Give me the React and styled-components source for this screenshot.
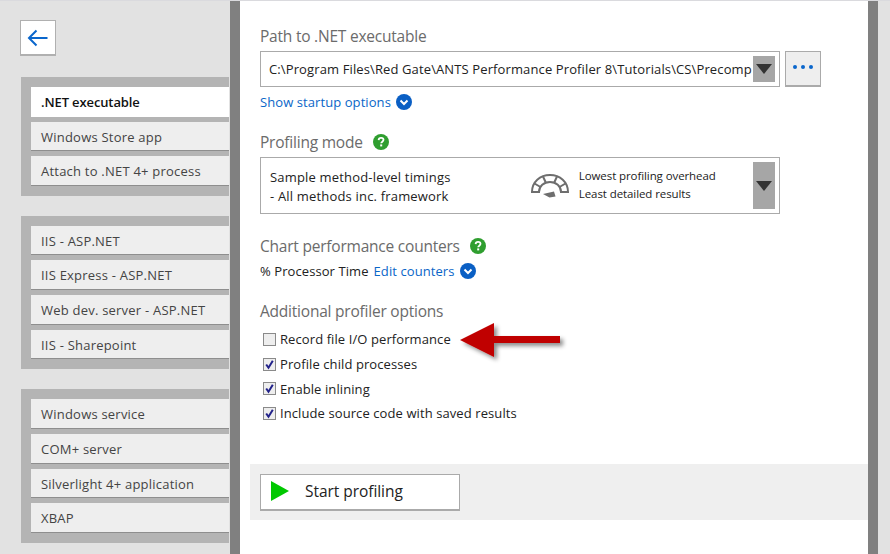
import React from "react";
import styled, { createGlobalStyle } from "styled-components";

const GlobalStyle = createGlobalStyle`
	html, body {
		margin: 0;
		padding: 0;
		background: #fff;
	}
	body {
		font-family: "Open Sans", "Liberation Sans", sans-serif;
		font-size: 13px;
		color: #222;
	}
`;

const Page = styled.div`
	width: 890px;
	height: 554px;
	display: flex;
	overflow: hidden;
	background: #e2e2e2;
	border-top: 1px solid #dadade;
	box-sizing: border-box;
`;

const Sidebar = styled.aside`
	width: 230px;
	flex-shrink: 0;
	box-sizing: border-box;
	padding: 19px 1px 0 21px;
`;

const BackButton = styled.button`
	display: flex;
	align-items: center;
	justify-content: center;
	width: 36px;
	height: 36px;
	padding: 0;
	margin-left: -1px;
	box-sizing: border-box;
	background: #fff;
	border: 1px solid #b0b0b0;
	border-bottom: 2px solid #b0b0b0;
`;

const NavGroup = styled.div`
	display: flex;
	flex-direction: column;
	gap: 5px;
	padding: 10px 0 10px 10px;
	margin-top: ${props => props.$top}px;
	background: #b4b4b4;
`;

const NavItem = styled.div`
	height: ${props => props.$height}px;
	box-sizing: border-box;
	display: flex;
	align-items: center;
	padding-left: 10px;
	padding-top: ${props => (props.$height === 29 ? 1 : 0)}px;
	font-size: 13px;
	letter-spacing: ${props => (props.$selected ? "-0.12px" : "0.22px")};
	white-space: nowrap;
	color: ${props => (props.$selected ? "#111" : "#444")};
	font-weight: ${props => (props.$selected ? 600 : 400)};
	background: ${props => (props.$selected ? "#fff" : "#eee")};
	border-bottom: ${props => (props.$selected ? "none" : "1px solid #8e8e8e")};
`;

const Main = styled.main`
	position: relative;
	width: 648px;
	height: 553px;
	flex-shrink: 0;
	box-sizing: border-box;
	background: #fff;
	border-left: 10px solid #808080;
	border-right: 10px solid #808080;
	padding: 24px 0 0 20px;
`;

const Heading = styled.h2`
	display: flex;
	align-items: center;
	gap: 10px;
	margin: ${props => props.$top || 0}px 0 0;
	height: 22px;
	font-size: 15.5px;
	font-weight: 400;
	letter-spacing: -0.22px;
	color: #6b6b6b;
`;

const PathRow = styled.div`
	display: flex;
	gap: 5px;
	margin-top: 4px;
`;

const PathBox = styled.div`
	width: 520px;
	height: 36px;
	box-sizing: border-box;
	display: flex;
	align-items: center;
	justify-content: space-between;
	padding: 0 4px 0 8px;
	background: #fff;
	border: 1px solid #aaa;
`;

const PathText = styled.span`
	white-space: nowrap;
	font-size: 13px;
	letter-spacing: 0.12px;
	color: #222;
`;

const DropButton = styled.span`
	width: 22px;
	height: ${props => props.$height}px;
	flex-shrink: 0;
	display: flex;
	align-items: center;
	justify-content: center;
	background: #a6a6a6;
`;

const DownTriangle = styled.span`
	width: 0;
	height: 0;
	border-left: 8px solid transparent;
	border-right: 8px solid transparent;
	border-top: 10px solid #333;
`;

const MoreButton = styled.button`
	width: 36px;
	height: 36px;
	padding: 0;
	box-sizing: border-box;
	display: flex;
	align-items: center;
	justify-content: center;
	gap: 4px;
	background: #eee;
	border: 1px solid #aaa;
	border-bottom: 2px solid #aaa;
`;

const Dot = styled.span`
	width: 4px;
	height: 4px;
	margin-bottom: 3px;
	border-radius: 50%;
	background: #0a66cc;
`;

const LinkRow = styled.div`
	display: flex;
	align-items: center;
	gap: 5px;
	height: 20px;
	margin-top: ${props => props.$top}px;
	font-size: 13px;
	letter-spacing: 0.08px;
	color: #222;
`;

const Link = styled.a`
	color: #0a66c8;
`;

const ModeBox = styled.div`
	width: 520px;
	height: 57px;
	margin-top: 4px;
	box-sizing: border-box;
	display: flex;
	align-items: center;
	padding: 0 4px 0 9px;
	background: #fff;
	border: 1px solid #aaa;
`;

const ModeName = styled.div`
	width: 257px;
	padding-top: 2px;
	font-size: 13px;
	line-height: 19px;
	letter-spacing: 0.18px;
	color: #222;
`;

const ModeNote = styled.div`
	width: 175px;
	margin: 0 0 2px 9px;
	font-size: 11.5px;
	line-height: 18px;
	letter-spacing: -0.09px;
	color: #222;
`;

const GaugeIcon = styled.svg`
	flex-shrink: 0;
	margin-left: 4px;
`;

const CheckList = styled.div`
	display: flex;
	flex-direction: column;
	margin-top: 5px;
`;

const CheckRow = styled.label`
	display: flex;
	align-items: center;
	gap: 4px;
	height: 24.7px;
	padding-left: 3px;
	font-size: 13px;
	letter-spacing: 0.09px;
	color: #222;
`;

const CheckBox = styled.span`
	width: 13px;
	height: 13px;
	box-sizing: border-box;
	display: flex;
	align-items: center;
	justify-content: center;
	background: #eee;
	border: 1px solid #8a8a8a;
`;

const Footer = styled.div`
	height: 56px;
	margin: 38px 0 0 -10px;
	box-sizing: border-box;
	padding: 10px 0 0 10px;
	background: #efefef;
`;

const StartButton = styled.button`
	width: 200px;
	height: 37px;
	box-sizing: border-box;
	display: flex;
	align-items: center;
	gap: 16px;
	padding: 0 0 2px 10px;
	background: #fff;
	border: 1px solid #aaa;
	border-bottom: 2px solid #aaa;
	font-family: inherit;
	font-size: 15.5px;
	letter-spacing: -0.05px;
	color: #222;
`;

const PointerArrow = styled.svg`
	position: absolute;
	left: 219px;
	top: 314px;
`;

const ChevronBadge = ({ size = 16 }) => (
	<svg width={size} height={size} viewBox="0 0 16 16">
		<circle cx="8" cy="8" r="8" fill="#0a5fc4" />
		<path d="M4.5 6.5 8 10l3.5-3.5" fill="none" stroke="#fff" strokeWidth="2" />
	</svg>
);

const HelpBadge = () => (
	<svg width="16" height="16" viewBox="0 0 16 16">
		<circle cx="8" cy="8" r="8" fill="#2f9e2f" />
		<path d="M5.6 6.1C5.7 4.6 6.7 3.8 8.1 3.8c1.400 0 2.400.8 2.400 2 0 1.900-2.300 1.800-2.300 3.500" fill="none" stroke="#fff" strokeWidth="1.800" />
		<rect x="7.200" y="10.400" width="2" height="2" fill="#fff" />
	</svg>
);

const Gauge = () => (
	<GaugeIcon width="40" height="26" viewBox="0 0 40 26">
		<g fill="none" stroke="#6e6e6e" strokeWidth="2">
			<path d="M2 19C2 9 10 2 20 2s18 7 18 17h-7c0-6-5-10-11-10S9 13 9 19z" />
			<path d="M13 3.500 16 10M27 3.500 24 10M4.500 10.500 10.500 14M35.500 10.500 29.500 14" />
		</g>
		<path d="M13 21l11-2.500 1.500 5-6 1z" fill="#6e6e6e" />
	</GaugeIcon>
);

const CheckMark = () => (
	<svg width="11" height="11" viewBox="0 0 11 11">
		<path d="M2.200 5.500 4.500 8.800 8.800 1.800" fill="none" stroke="#22228a" strokeWidth="2" />
	</svg>
);

const groups = [
	{
		top: 21,
		items: [
			{ label: ".NET executable", height: 30, selected: true },
			{ label: "Windows Store app", height: 29 },
			{ label: "Attach to .NET 4+ process", height: 30 },
		],
	},
	{
		top: 20,
		items: [
			{ label: "IIS - ASP.NET", height: 29 },
			{ label: "IIS Express - ASP.NET", height: 30 },
			{ label: "Web dev. server - ASP.NET", height: 30 },
			{ label: "IIS - Sharepoint", height: 29 },
		],
	},
	{
		top: 20,
		items: [
			{ label: "Windows service", height: 30 },
			{ label: "COM+ server", height: 30 },
			{ label: "Silverlight 4+ application", height: 29 },
			{ label: "XBAP", height: 30 },
		],
	},
];

const options = [
	{ label: "Record file I/O performance", checked: false },
	{ label: "Profile child processes", checked: true },
	{ label: "Enable inlining", checked: true },
	{ label: "Include source code with saved results", checked: true },
];

const App = () => (
	<Page>
		<GlobalStyle />
		<Sidebar>
			<BackButton aria-label="Back">
				<svg width="22" height="18" viewBox="0 0 22 18">
					<path d="M20.500 9H2M9.500 1.500 2 9l7.500 7.500" fill="none" stroke="#0a66cc" strokeWidth="2" />
				</svg>
			</BackButton>
			{groups.map(group => (
				<NavGroup key={group.items[0].label} $top={group.top}>
					{group.items.map(item => (
						<NavItem key={item.label} $height={item.height} $selected={item.selected}>
							{item.label}
						</NavItem>
					))}
				</NavGroup>
			))}
		</Sidebar>
		<Main>
			<Heading>Path to .NET executable</Heading>
			<PathRow>
				<PathBox>
					<PathText>C:\Program Files\Red Gate\ANTS Performance Profiler 8\Tutorials\CS\Precomp</PathText>
					<DropButton $height={26}><DownTriangle /></DropButton>
				</PathBox>
				<MoreButton aria-label="Browse">
					<Dot />
					<Dot />
					<Dot />
				</MoreButton>
			</PathRow>
			<LinkRow $top={5}>
				<Link>Show startup options</Link>
				<ChevronBadge />
			</LinkRow>
			<Heading $top={19}>Profiling mode <HelpBadge /></Heading>
			<ModeBox>
				<ModeName>
					Sample method-level timings
					<br />
					- All methods inc. framework
				</ModeName>
				<Gauge />
				<ModeNote>
					Lowest profiling overhead
					<br />
					Least detailed results
				</ModeNote>
				<DropButton $height={47}><DownTriangle /></DropButton>
			</ModeBox>
			<Heading $top={21}>Chart performance counters <HelpBadge /></Heading>
			<LinkRow $top={4}>
				<span>% Processor Time</span>
				<Link>Edit counters</Link>
				<ChevronBadge />
			</LinkRow>
			<Heading $top={19}>Additional profiler options</Heading>
			<CheckList>
				{options.map(option => (
					<CheckRow key={option.label}>
						<CheckBox>{option.checked && <CheckMark />}</CheckBox>
						{option.label}
					</CheckRow>
				))}
			</CheckList>
			<Footer>
				<StartButton>
					<svg width="18" height="20" viewBox="0 0 18 20"><path d="M0 0 18 10 0 20z" fill="#00c800" /></svg>
					Start profiling
				</StartButton>
			</Footer>
			<PointerArrow width="112" height="52" viewBox="0 0 112 52">
				<defs>
					<filter id="arrowShadow" x="-10%" y="-20%" width="125%" height="150%">
						<feDropShadow dx="3" dy="3" stdDeviation="2" floodColor="#000" floodOpacity="0.45" />
					</filter>
				</defs>
				<path d="M1 25 35 8V21H101V28H35V42z" fill="#c00000" filter="url(#arrowShadow)" />
			</PointerArrow>
		</Main>
	</Page>
);

export default App;
